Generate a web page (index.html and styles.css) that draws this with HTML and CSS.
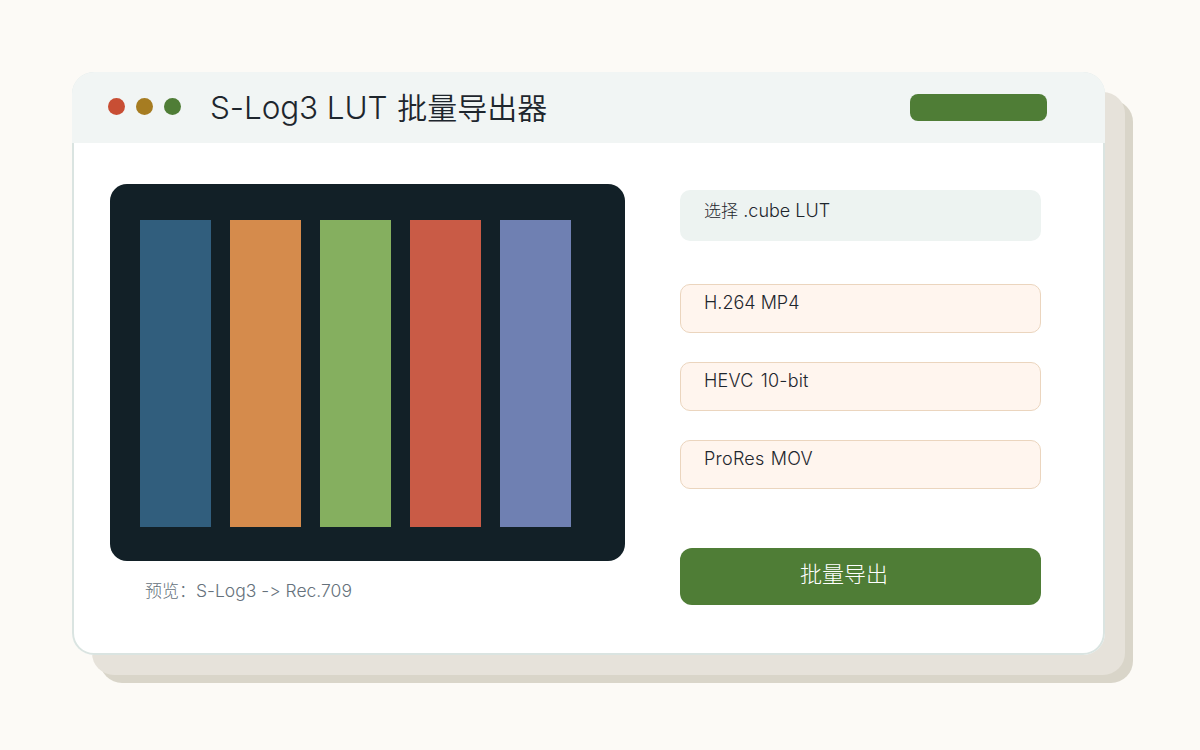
FILE: index.html
```html
<!DOCTYPE html>
<html lang="zh-CN">
<head>
	<meta charset="UTF-8">
	<title>S-Log3 LUT 批量导出器</title>
	<link rel="stylesheet" href="styles.css">
</head>
<body>
	<div class="window">
		<div class="header">
			<div class="dots">
				<div class="red"></div>
				<div class="yellow"></div>
				<div class="green"></div>
			</div>
			<h1><span class="en">S-Log3 LUT</span> 批量导出器</h1>
			<div class="status"></div>
		</div>
		<div class="main">
			<div class="left">
				<div class="preview">
					<div class="bar blue"></div>
					<div class="bar orange"></div>
					<div class="bar lime"></div>
					<div class="bar coral"></div>
					<div class="bar purple"></div>
				</div>
				<p class="caption">预览：<span class="en">S-Log3 -&gt; Rec.709</span></p>
			</div>
			<div class="right">
				<div class="field">选择 <span class="en">.cube LUT</span></div>
				<div class="options">
					<div class="option"><span class="en">H.264 MP4</span></div>
					<div class="option"><span class="en hevc">HEVC 10-bit</span></div>
					<div class="option"><span class="en prores">ProRes MOV</span></div>
				</div>
				<button class="export">批量导出</button>
			</div>
		</div>
	</div>
</body>
</html>
```
FILE: styles.css
```css
*{
	box-sizing: border-box;
	margin:0;
	padding:0;
}
body{
	padding:72px;
	background-color: #fcfaf6;
	color:#1e262d;
	font-family: "Noto Sans CJK SC", sans-serif;
	font-weight: 300;
}
.en{
	font-family: Inter, "Liberation Sans", sans-serif;
	font-weight: 300;
	font-feature-settings: "calt" 0;
	word-spacing: 0;
}
.window{
	width:1033px;
	height:583px;
	border-radius: 22px;
	background-color: #fff;
	box-shadow: inset 0 0 0 2px #dae4e1, 20px 20px 0 #e6e2da, 28px 28px 0 #d9d5c9;
}
.header{
	display: flex;
	height:71px;
	padding:0 58px 0 36px;
	border-radius: 22px 22px 0 0;
	background-color: #f1f5f4;
}
.dots{
	display: flex;
	gap:11px;
	margin-top:26px;
}
.dots div{
	width:17px;
	height:17px;
	border-radius: 50%;
}
.red{
	background-color: #c84e34;
}
.yellow{
	background-color: #a67c21;
}
.green{
	background-color: #4f7d36;
}
.header h1{
	margin:11px 0 0 29px;
	font-size: 30px;
	font-weight: 350;
	line-height: 46px;
	white-space: nowrap;
	word-spacing: 3px;
}
.header h1 .en{
	font-size: 31.5px;
	letter-spacing: -.1px;
}
.status{
	width:137px;
	height:27px;
	margin:22px 0 0 auto;
	border-radius: 8px;
	background-color: #4f7d36;
}
.main{
	display: flex;
	gap:55px;
	padding:41px 38px 0;
}
.preview{
	display: flex;
	gap:19px;
	width:515px;
	height:377px;
	padding:36px 30px 34px;
	border-radius: 17px;
	background-color: #122027;
}
.bar{
	width:71px;
}
.blue{
	background-color: #315e7d;
}
.orange{
	background-color: #d58b4c;
}
.lime{
	background-color: #85af5f;
}
.coral{
	background-color: #c95b46;
}
.purple{
	background-color: #6f80b2;
}
.caption{
	margin:16px 0 0 35px;
	color:#65717b;
	font-size: 17px;
	line-height: 26px;
}
.caption .en{
	font-size: 17.5px;
}
.right{
	width:361px;
	padding-top:6px;
}
.field{
	height:51px;
	padding:7px 24px;
	border-radius: 10px;
	background-color: #edf3f1;
	font-size: 17px;
	line-height: 26px;
	word-spacing: 1.5px;
}
.field .en, .option .en{
	font-size: 18px;
}
.options{
	display: grid;
	gap:29px;
	margin:43px 0 59px;
}
.option{
	height:49px;
	padding:4px 23px;
	border:1px solid #ebd5be;
	border-radius: 10px;
	background-color: #fff5ee;
	font-size: 17px;
	line-height: 26px;
}
.hevc{
	letter-spacing: .2px;
	word-spacing: 2px;
}
.prores{
	letter-spacing: .25px;
	word-spacing: 1px;
}
.export{
	display: block;
	width:361px;
	height:57px;
	padding:0 0 9px 120px;
	border:0;
	border-radius: 12px;
	background-color: #4f7d36;
	color:#fff;
	font-family: inherit;
	font-size: 22px;
	font-weight: 300;
	text-align: left;
}
```
